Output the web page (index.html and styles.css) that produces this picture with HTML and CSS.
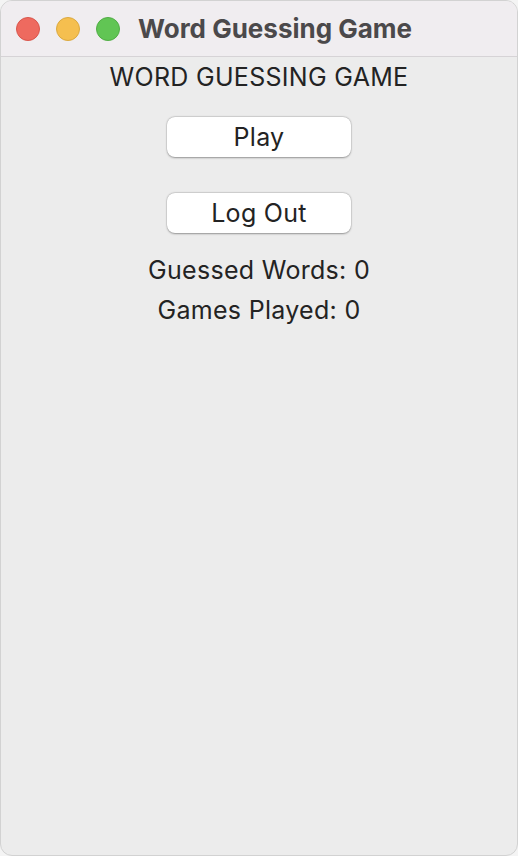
FILE: index.html
```html
<!DOCTYPE html>
<html>
<head>
<meta charset="utf-8">
<link rel="stylesheet" href="styles.css">
</head>
<body>
<div class="window">
  <div class="titlebar">
    <div class="lights">
      <span class="light red"></span>
      <span class="light yellow"></span>
      <span class="light green"></span>
    </div>
    <div class="title">Word Guessing Game</div>
  </div>
  <div class="content">
    <div class="heading">WORD GUESSING GAME</div>
    <button class="btn btn-play">Play</button>
    <button class="btn btn-logout">Log Out</button>
    <div class="stat stat-first">Guessed Words: 0</div>
    <div class="stat">Games Played: 0</div>
  </div>
</div>
</body>
</html>
```
FILE: styles.css
```css
html, body {
  margin: 0;
  padding: 0;
  width: 518px;
  height: 856px;
  background: #f4f4f4;
  overflow: hidden;
}
.window {
  box-sizing: border-box;
  width: 518px;
  height: 856px;
  border: 1px solid #d2d2d2;
  border-radius: 12px;
  overflow: hidden;
  background: #ececec;
  display: flex;
  flex-direction: column;
  font-family: "Inter", "Liberation Sans", sans-serif;
}
.titlebar {
  height: 55px;
  flex: none;
  background: #f0edf0;
  border-bottom: 1px solid #d6d3d6;
  display: flex;
  align-items: center;
  padding-left: 15px;
}
.lights {
  display: flex;
  gap: 16px;
}
.light {
  width: 24px;
  height: 24px;
  border-radius: 50%;
  box-sizing: border-box;
}
.red { background: #ee6a5f; border: 1px solid #d9564c; }
.yellow { background: #f5bf4f; border: 1px solid #dba93f; }
.green { background: #61c554; border: 1px solid #51ad45; }
.title {
  margin-left: 18px;
  font-weight: 700;
  font-size: 26px;
  color: #4b494b;
}
.content {
  display: flex;
  flex-direction: column;
  align-items: center;
  color: #232323;
  font-size: 25px;
  letter-spacing: 0.3px;
}
.heading {
  margin-top: 6px;
  line-height: 28px;
}
.btn {
  font-family: inherit;
  font-size: 25px;
  letter-spacing: 0.3px;
  color: #232323;
  width: 184px;
  height: 40px;
  border: none;
  border-radius: 8px;
  background: #ffffff;
  box-shadow: 0 0.5px 2px rgba(0,0,0,0.35), 0 0 0 0.5px rgba(0,0,0,0.08);
  padding: 0;
  line-height: 40px;
}
.btn-play { margin-top: 26px; }
.btn-logout { margin-top: 36px; }
.stat {
  line-height: 40px;
}
.stat-first { margin-top: 17px; }
```
